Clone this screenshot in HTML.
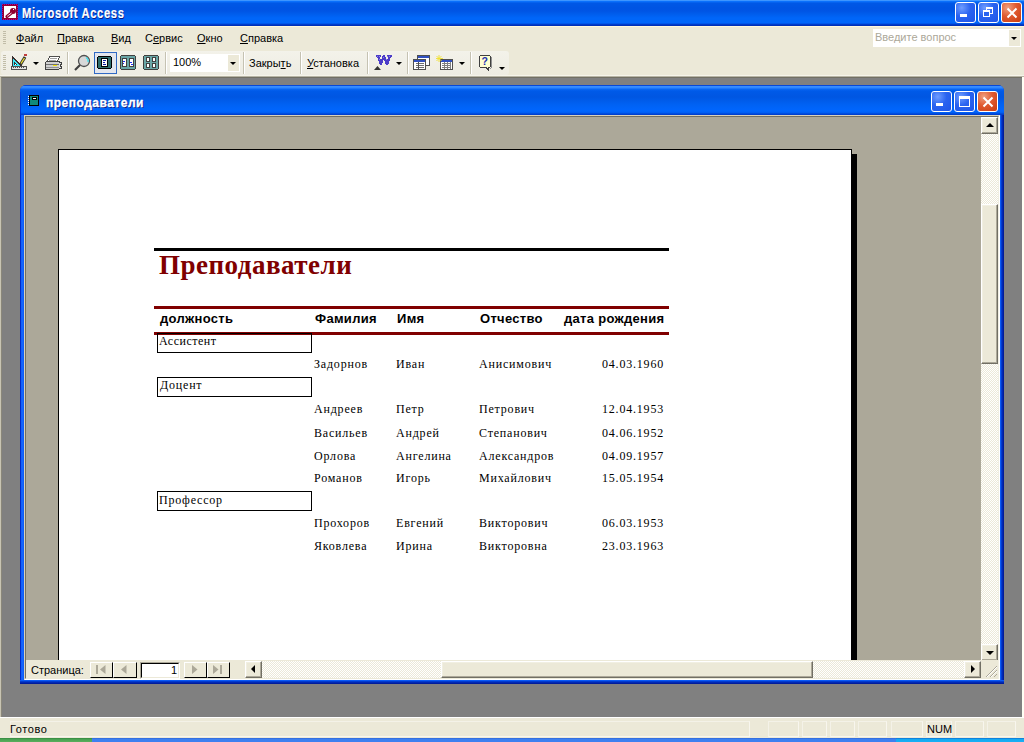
<!DOCTYPE html>
<html><head><meta charset="utf-8">
<style>
*{margin:0;padding:0;box-sizing:border-box}
html,body{width:1024px;height:742px;overflow:hidden;background:#ECE9D8;font-family:"Liberation Sans",sans-serif;font-size:11px;color:#000}
.a{position:absolute}
svg{position:absolute;overflow:visible}
#title{left:0;top:0;width:1024px;height:26px;background:linear-gradient(#3D95FF 0px,#3D95FF 1px,#0A74FF 1px,#0A6CF8 2px,#0058E6 3px,#0054E3 8px,#0055E5 11px,#005DEC 14px,#0066F9 18px,#0066FA 23px,#0048DA 24px,#0030B8 25px,#0030B8 26px)}
.ttl{color:#fff;font-weight:bold;text-shadow:1px 1px 0 #0A1883;white-space:nowrap}
.menu{top:32px;font-size:11px;white-space:nowrap}
.u{text-decoration:underline;text-underline-offset:1px}
.cb{width:21px;height:21px;border:1px solid #fff;border-radius:3px;background:radial-gradient(circle at 30% 25%,#6F9DFF 0,#2A63F0 45%,#1E55E8 100%)}
.cb.x{background:radial-gradient(circle at 30% 25%,#F0A080 0,#E05A30 45%,#C83C10 100%)}
.sep{width:1px;height:22px;background:#C5C2B2;border-right:1px solid #fff;width:2px}
.dd{width:0;height:0;border-left:3px solid transparent;border-right:3px solid transparent;border-top:3px solid #000}
.dither{background-color:#FFFFFF;background-image:linear-gradient(45deg,#ECE9D8 25%,transparent 25%,transparent 75%,#ECE9D8 75%),linear-gradient(45deg,#ECE9D8 25%,transparent 25%,transparent 75%,#ECE9D8 75%);background-size:2px 2px;background-position:0 0,1px 1px}
.btn3d{background:#ECE9D8;border-top:1px solid #fff;border-left:1px solid #fff;border-right:1px solid #716F64;border-bottom:1px solid #716F64;box-shadow:inset -1px -1px 0 #ACA899,inset 1px 1px 0 #F1EFE2}
.serif{font-family:"Liberation Serif",serif;font-size:12px;white-space:nowrap;letter-spacing:0.8px}
.hdr{font-weight:bold;font-size:13px;white-space:nowrap;letter-spacing:0.3px}
.pbox{border:1px solid #000;width:155px;height:20px}
</style></head><body>

<!-- main title bar -->
<div id="title" class="a"></div>
<svg style="left:2px;top:4px" width="16" height="16" shape-rendering="crispEdges">
 <rect x="0" y="0" width="16" height="16" fill="#900030"/>
 <path d="M0 0h1M2 0h1M4 0h1M6 0h1M8 0h1M10 0h1M12 0h1M14 0h1M1 15h1M3 15h1M5 15h1M7 15h1M9 15h1M11 15h1M13 15h1M15 15h1M0 2v1M0 4v1M0 6v1M0 8v1M0 10v1M0 12v1M15 1v1M15 3v1M15 5v1M15 7v1M15 9v1M15 11v1M15 13v1" stroke="#A000A0"/>
 <rect x="2" y="2" width="12" height="12" fill="#fff"/>
 <circle cx="11" cy="7" r="3" fill="#900030" shape-rendering="auto"/>
 <path d="M10 8.5 L5 12.5" stroke="#900030" stroke-width="3.2" stroke-linecap="round" shape-rendering="auto"/>
 <rect x="11" y="5" width="1" height="1" fill="#fff"/><path d="M9.5 9 L5.2 12.3" stroke="#fff" stroke-width="0.9" shape-rendering="auto"/>
</svg>
<div class="a ttl" style="left:22px;top:5px;font-size:14px;letter-spacing:0.8px;transform:scaleX(0.8);transform-origin:0 0;-webkit-text-stroke:0.2px #fff">Microsoft Access</div>
<div class="a cb" style="left:955px;top:2px"><div class="a" style="left:4px;top:11px;width:7px;height:3px;background:#fff"></div></div>
<div class="a cb" style="left:978px;top:2px"><div class="a" style="left:7px;top:4px;width:7px;height:7px;border:1px solid #fff;border-top-width:2px"></div><div class="a" style="left:4px;top:7px;width:7px;height:7px;border:1px solid #fff;border-top-width:2px;background:#2A63F0"></div></div>
<div class="a cb x" style="left:1001px;top:2px"><svg style="left:4px;top:4px" width="12" height="12"><path d="M1.5 1.5 L10.5 10.5 M10.5 1.5 L1.5 10.5" stroke="#fff" stroke-width="2"/></svg></div>

<!-- menu bar -->
<div class="a" style="left:0;top:26px;width:1024px;height:1px;background:#FFF8DC"></div>
<div class="a" style="left:3px;top:31px;width:3px;height:13px;background:repeating-linear-gradient(#C1BDA8 0,#C1BDA8 1px,transparent 1px,transparent 2px)"></div>
<div class="a menu" style="left:16px"><span class="u">Ф</span>айл</div>
<div class="a menu" style="left:57px"><span class="u">П</span>равка</div>
<div class="a menu" style="left:111px"><span class="u">В</span>ид</div>
<div class="a menu" style="left:145px">С<span class="u">е</span>рвис</div>
<div class="a menu" style="left:197px"><span class="u">О</span>кно</div>
<div class="a menu" style="left:240px"><span class="u">С</span>правка</div>
<div class="a" style="left:873px;top:29px;width:148px;height:18px;background:#fff"></div>
<div class="a" style="left:1009px;top:30px;width:11px;height:16px;background:#ECE9D8"></div>
<div class="a dd" style="left:1011px;top:37px"></div>
<div class="a" style="left:875px;top:31px;color:#ACA899;font-size:11px">Введите вопрос</div>

<!-- toolbar -->
<div class="a" style="left:1px;top:51px;width:508px;height:24px;background:linear-gradient(#F3F2EA,#EEECE2);border-radius:3px"></div>
<div class="a" style="left:3px;top:55px;width:3px;height:15px;background:repeating-linear-gradient(#C1BDA8 0,#C1BDA8 1px,transparent 1px,transparent 2px)"></div>
<svg id="ic-design" style="left:11px;top:54px" width="16" height="16" shape-rendering="crispEdges">
 <path d="M1 1 L1 13 L12 13 Z" fill="#3A3030"/><path d="M2 4 L2 12 L9 12 Z" fill="#3CE8F8"/>
 <path d="M3 8 L3 11 L6 11 Z" fill="#3A3030"/><rect x="4" y="10" width="1" height="1" fill="#fff"/>
 <rect x="0" y="12" width="16" height="4" fill="#505050"/><rect x="1" y="13" width="14" height="2" fill="#E4E4E4"/>
 <path d="M2 13h1M4 13h1M6 13h1M8 13h1M10 13h1M12 13h1" stroke="#505050"/>
 <path d="M9.5 10.5 L14 3" stroke="#303030" stroke-width="3" shape-rendering="auto"/>
 <path d="M10 9.5 L13.5 4" stroke="#F0E030" stroke-width="1.3" shape-rendering="auto"/>
 <rect x="13" y="0" width="3" height="2" fill="#C04040"/>
</svg>
<div class="a dd" style="left:33px;top:62px"></div>
<svg style="left:45px;top:55px" width="17" height="16" shape-rendering="crispEdges">
 <path d="M4.5 1.5 L14.5 1.5 L12.5 6.5 L2.5 6.5 Z" fill="#fff" stroke="#505050"/>
 <path d="M5 3h7M4 5h7" stroke="#A0A0A0"/>
 <rect x="0.5" y="6.5" width="14" height="8" rx="1.5" fill="#D0D0D0" stroke="#404040"/>
 <rect x="1" y="9" width="13" height="1" fill="#707070"/><rect x="1" y="12" width="13" height="1" fill="#909090"/>
 <rect x="8" y="10" width="4" height="1" fill="#F0E000"/>
 <path d="M14 7h2v2h-1v2h1v2h-2" fill="#E0E0E0" stroke="#404040"/>
</svg>
<div class="a sep" style="left:67px;top:52px"></div>
<svg style="left:73px;top:54px" width="18" height="18">
 <circle cx="11" cy="7" r="5.5" fill="#D8D8D8" stroke="#505050" stroke-width="1.3"/>
 <path d="M13 3.5 A4 4 0 0 1 15 8" stroke="#30E0F0" stroke-width="1.2" fill="none"/>
 <path d="M2 16 L7 11" stroke="#404040" stroke-width="2.2"/>
</svg>
<div class="a" style="left:94px;top:52px;width:23px;height:22px;background:#E3E6EE;border:1px solid #316AC5"></div>
<svg style="left:97px;top:56px" width="15" height="13" shape-rendering="crispEdges">
 <rect x="0.5" y="0.5" width="14" height="12" rx="2" fill="#2E6E6E" stroke="#000"/>
 <rect x="4" y="2" width="7" height="9" fill="#000"/><rect x="5" y="3" width="5" height="7" fill="#fff"/>
 <rect x="6" y="4" width="3" height="1" fill="#1020A0"/><rect x="6" y="6" width="2" height="1" fill="#1020A0"/><rect x="6" y="8" width="3" height="1" fill="#1020A0"/>
</svg>
<svg style="left:120px;top:55px" width="16" height="15" shape-rendering="crispEdges">
 <path d="M1 0h14v1h1v13h-1v1H1v-1H0V1h1z" fill="#404040"/>
 <rect x="1" y="1" width="14" height="13" fill="#6AA6A6"/>
 <rect x="2" y="3" width="5" height="9" fill="#404040"/><rect x="3" y="4" width="3" height="7" fill="#fff"/>
 <rect x="9" y="3" width="5" height="9" fill="#404040"/><rect x="10" y="4" width="3" height="7" fill="#fff"/>
 <rect x="3" y="6" width="2" height="1" fill="#2030F0"/><rect x="3" y="8" width="1" height="1" fill="#2030F0"/>
 <rect x="10" y="7" width="2" height="1" fill="#2030F0"/><rect x="11" y="9" width="2" height="1" fill="#2030F0"/>
</svg>
<svg style="left:143px;top:55px" width="16" height="15" shape-rendering="crispEdges">
 <path d="M1 0h14v1h1v13h-1v1H1v-1H0V1h1z" fill="#404040"/>
 <rect x="1" y="1" width="14" height="13" fill="#6AA6A6"/>
 <rect x="3" y="2" width="4" height="5" fill="#404040"/><rect x="4" y="3" width="2" height="3" fill="#fff"/>
 <rect x="9" y="2" width="4" height="5" fill="#404040"/><rect x="10" y="3" width="2" height="3" fill="#fff"/>
 <rect x="3" y="8" width="4" height="5" fill="#404040"/><rect x="4" y="9" width="2" height="3" fill="#fff"/>
 <rect x="9" y="8" width="4" height="5" fill="#404040"/><rect x="10" y="9" width="2" height="3" fill="#fff"/>
</svg>

<div class="a sep" style="left:165px;top:52px"></div>
<div class="a" style="left:170px;top:54px;width:70px;height:18px;background:#fff"></div>
<div class="a" style="left:228px;top:55px;width:11px;height:16px;background:#ECE9D8"></div>
<div class="a dd" style="left:230px;top:62px"></div>
<div class="a" style="left:173px;top:56px">100%</div>
<div class="a sep" style="left:243px;top:52px"></div>
<div class="a menu" style="left:249px;top:57px">Закры<span class="u">т</span>ь</div>
<div class="a sep" style="left:300px;top:52px"></div>
<div class="a menu" style="left:307px;top:57px"><span class="u">У</span>становка</div>
<div class="a sep" style="left:367px;top:52px"></div>
<svg style="left:374px;top:55px" width="17" height="16" shape-rendering="crispEdges">
 <path d="M2 0h5v2h-1l1 4l2-6h2l2 6l1-4h-1v-2h5v2h-1l-3 8h-2l-2-6l-2 6h-2l-3-8h-1z" fill="#4C3CC8"/>
 <path d="M3 1h1M5 1h1M13 1h1M15 1h1M5 4h1M12 4h1M9 2h1" stroke="#8C80E8"/>
 <path d="M0 15 L3.5 11 L7 15z" fill="#333" shape-rendering="auto"/>
</svg>
<div class="a dd" style="left:396px;top:62px"></div>
<div class="a sep" style="left:407px;top:52px"></div>
<svg style="left:413px;top:55px" width="18" height="16" shape-rendering="crispEdges">
 <rect x="4" y="0" width="13" height="11" fill="#505050"/><rect x="5" y="1" width="11" height="2" fill="#3050C0"/><rect x="5" y="3" width="11" height="7" fill="#fff"/>
 <rect x="0" y="4" width="13" height="11" fill="#505050"/><rect x="1" y="5" width="11" height="2" fill="#3050C0"/><rect x="1" y="7" width="11" height="7" fill="#fff"/>
 <path d="M3 8h8M3 10h8M3 12h8" stroke="#707070"/><path d="M5 7v7" stroke="#505050"/>
</svg>
<svg style="left:436px;top:55px" width="18" height="16" shape-rendering="crispEdges">
 <rect x="4" y="4" width="13" height="11" fill="#505050"/><rect x="5" y="5" width="11" height="2" fill="#3050C0"/><rect x="5" y="7" width="11" height="7" fill="#fff"/>
 <path d="M6 8h9M6 10h9M6 12h9M8 7v7M11 7v7M14 7v7" stroke="#808080"/>
 <path d="M3 0v7M0 3.5h7M0.5 1l5 5M5.5 1l-5 5" stroke="#F0E030" shape-rendering="auto" stroke-width="0.9"/>
</svg>
<div class="a dd" style="left:459px;top:62px"></div>
<div class="a sep" style="left:470px;top:52px"></div>
<svg style="left:478px;top:55px" width="16" height="16" shape-rendering="crispEdges">
 <path d="M2 0h10v1h1v11h-1v1h-1v3h-1l-3-3h-5v-1h-1v-11h1z" fill="#404040"/>
 <path d="M2 1h10v11h-2v2l-2-2h-6z" fill="#FFFFD0"/>
 <path d="M13 2h1v11h-1zM12 13h1v1h-1z" fill="#909090"/>
 <text x="3.5" y="10" font-family="Liberation Sans" font-weight="bold" font-size="10.5" fill="#2030B0" shape-rendering="auto">?</text>
</svg>
<div class="a dd" style="left:499px;top:67px"></div>

<!-- MDI area -->
<div class="a" style="left:0;top:75px;width:1024px;height:1px;background:#F6F4EA"></div>
<div class="a" style="left:0;top:76px;width:1024px;height:1px;background:#B8B5A5"></div>
<div class="a" style="left:0;top:77px;width:1px;height:641px;background:#C8C4B2"></div>
<div class="a" style="left:1px;top:77px;width:1021px;height:641px;background:#808080;border-top:1px solid #716F64;border-left:1px solid #8A877A"></div>
<div class="a" style="left:1022px;top:77px;width:2px;height:641px;background:#FFFFF4"></div>

<!-- child window -->
<div class="a" style="left:20px;top:85px;width:984px;height:599px;background:#0842D8;border-radius:6px 6px 0 0"></div>
<div class="a" style="left:20px;top:85px;width:984px;height:30px;border-radius:6px 6px 0 0;background:linear-gradient(#0848D8 0,#0848D8 1px,#3C90FF 1px,#2C84FF 3px,#0A68F5 4px,#005AE8 6px,#0056E2 12px,#0062F4 20px,#0066FF 26px,#005CF0 28px,#0040D0 29px,#0040D0 30px)"></div>
<div class="a" style="left:20px;top:115px;width:4px;height:569px;background:linear-gradient(90deg,#0028C8 0,#0028C8 1px,#0A5AF5 1px,#1A68FF 2px,#0A5AF5 4px)"></div><div class="a" style="left:20px;top:92px;width:1px;height:23px;background:linear-gradient(#0848E0,#0030D0)"></div>
<div class="a" style="left:1000px;top:115px;width:4px;height:569px;background:linear-gradient(90deg,#0A5AF5 0,#0A5AF5 1px,#0046E0 1px,#0030C0 2px,#0020A8 3px,#001890 4px)"></div>
<div class="a" style="left:20px;top:680px;width:984px;height:4px;background:linear-gradient(#0A5AF5 0,#0A5AF5 1px,#0046E0 1px,#0030C0 2px,#0020A8 3px,#001890 4px)"></div>
<svg style="left:28px;top:95px" width="12" height="12" shape-rendering="crispEdges">
 <rect x="1" y="0" width="10" height="11" fill="#000"/><rect x="2" y="1" width="8" height="9" fill="#108A7A"/>
 <rect x="4" y="2" width="5" height="3" fill="#000"/><rect x="5" y="3" width="3" height="1" fill="#fff"/>
 <path d="M0 1h1M0 3h1M0 5h1M0 7h1M0 9h1" stroke="#fff"/>
</svg>
<div class="a ttl" style="left:46px;top:96px;font-size:12px;letter-spacing:0.5px;-webkit-text-stroke:0.3px #fff">преподаватели</div>
<div class="a cb" style="left:931px;top:91px"><div class="a" style="left:4px;top:11px;width:7px;height:3px;background:#fff"></div></div>
<div class="a cb" style="left:954px;top:91px"><div class="a" style="left:4px;top:4px;width:11px;height:11px;border:1px solid #fff;border-top-width:3px"></div></div>
<div class="a cb x" style="left:977px;top:91px"><svg style="left:4px;top:4px" width="12" height="12"><path d="M1.5 1.5 L10.5 10.5 M10.5 1.5 L1.5 10.5" stroke="#fff" stroke-width="2"/></svg></div>

<!-- content frame -->
<div class="a" style="left:24px;top:115px;width:976px;height:565px;background:#ECE9D8;border-top:1px solid #D8D2BD;border-left:1px solid #D8D2BD;border-right:1px solid #fff;border-bottom:1px solid #fff"></div>
<div class="a" style="left:25px;top:116px;width:974px;height:563px;border-top:1px solid #716F64;border-left:1px solid #716F64;border-right:1px solid #F1EFE2;border-bottom:1px solid #F1EFE2"></div>
<div class="a" style="left:26px;top:117px;width:955px;height:543px;background:#ACA899;overflow:hidden">
  <div class="a" style="left:32px;top:32px;width:794px;height:600px;background:#fff;border:1px solid #000"></div>
  <div class="a" style="left:826px;top:37px;width:5px;height:600px;background:#000"></div>
</div>

<!-- vertical scrollbar -->
<div class="a dither" style="left:981px;top:117px;width:17px;height:543px"></div>
<div class="a btn3d" style="left:981px;top:117px;width:17px;height:17px"></div>
<div class="a" style="left:986px;top:123px;width:0;height:0;border-left:4px solid transparent;border-right:4px solid transparent;border-bottom:4px solid #000"></div>
<div class="a btn3d" style="left:981px;top:204px;width:17px;height:160px"></div>
<div class="a btn3d" style="left:981px;top:644px;width:17px;height:17px"></div>
<div class="a" style="left:986px;top:651px;width:0;height:0;border-left:4px solid transparent;border-right:4px solid transparent;border-top:4px solid #000"></div>

<!-- bottom nav / h scrollbar -->
<div class="a" style="left:26px;top:660px;width:972px;height:19px;background:#ECE9D8"></div>
<div class="a" style="left:31px;top:664px">Страница:</div>
<div class="a" style="left:90px;top:662px;width:23px;height:16px;background:#ECE9D8;border-top:1px solid #fff;border-left:1px solid #fff;border-bottom:1px solid #000;border-right:1px solid #000"></div>
<div class="a" style="left:113px;top:662px;width:24px;height:16px;background:#ECE9D8;border-top:1px solid #fff;border-left:1px solid #fff;border-bottom:1px solid #000;border-right:1px solid #000"></div>
<div class="a" style="left:184px;top:662px;width:23px;height:16px;background:#ECE9D8;border-top:1px solid #fff;border-left:1px solid #fff;border-bottom:1px solid #000;border-right:1px solid #000"></div>
<div class="a" style="left:207px;top:662px;width:23px;height:16px;background:#ECE9D8;border-top:1px solid #fff;border-left:1px solid #fff;border-bottom:1px solid #000;border-right:1px solid #000"></div>
<svg style="left:90px;top:662px" width="140" height="16">
 <rect x="6" y="3" width="2" height="9" fill="#ACA899"/><path d="M15.5 3 V12 L10 7.5z" fill="#ACA899"/>
 <path d="M36.5 3 V12 L31 7.5z" fill="#ACA899"/>
 <path d="M102 3 V12 L107.5 7.5z" fill="#ACA899"/>
 <path d="M123 3 V12 L128.5 7.5z" fill="#ACA899"/><rect x="130" y="3" width="2" height="9" fill="#ACA899"/>
</svg>
<div class="a" style="left:140px;top:662px;width:40px;height:17px;background:#fff;border-top:1px solid #ACA899;border-left:1px solid #ACA899;border-right:1px solid #fff;border-bottom:1px solid #fff"></div>
<div class="a" style="left:141px;top:663px;width:38px;height:15px;border-top:1px solid #000;border-left:1px solid #000;border-right:1px solid #ECE9D8;border-bottom:1px solid #ECE9D8"></div>
<div class="a" style="left:171px;top:664px">1</div>
<div class="a dither" style="left:245px;top:661px;width:736px;height:17px"></div>
<div class="a btn3d" style="left:245px;top:661px;width:17px;height:17px"></div>
<div class="a" style="left:251px;top:665px;width:0;height:0;border-top:4px solid transparent;border-bottom:4px solid transparent;border-right:4px solid #000"></div>
<div class="a btn3d" style="left:441px;top:661px;width:372px;height:17px"></div>
<div class="a btn3d" style="left:964px;top:661px;width:17px;height:17px"></div>
<div class="a" style="left:971px;top:665px;width:0;height:0;border-top:4px solid transparent;border-bottom:4px solid transparent;border-left:4px solid #000"></div>
<svg style="left:981px;top:661px" width="17" height="17">
 <path d="M16 5 L5 16 M16 9 L9 16 M16 13 L13 16" stroke="#ACA899" stroke-width="1"/>
 <path d="M16 6 L6 16 M16 10 L10 16" stroke="#fff" stroke-width="1"/>
</svg>

<!-- report content -->
<div class="a" style="left:154px;top:248px;width:515px;height:3px;background:#000"></div>
<div class="a" style="left:159px;top:250px;font-family:'Liberation Serif',serif;font-weight:bold;font-size:27px;color:#800000;white-space:nowrap;letter-spacing:0.5px">Преподаватели</div>
<div class="a" style="left:154px;top:306px;width:515px;height:3px;background:#800000"></div>
<div class="a" style="left:154px;top:332px;width:515px;height:3px;background:#800000"></div>
<div class="a hdr" style="left:160px;top:311px">должность</div>
<div class="a hdr" style="left:315px;top:311px">Фамилия</div>
<div class="a hdr" style="left:397px;top:311px">Имя</div>
<div class="a hdr" style="left:480px;top:311px">Отчество</div>
<div class="a hdr" style="left:564px;top:311px">дата рождения</div>

<div class="a pbox" style="left:157px;top:333px"></div>
<div class="a serif" style="left:159px;top:334px;letter-spacing:0.5px">Ассистент</div>
<div class="a pbox" style="left:157px;top:377px"></div>
<div class="a serif" style="left:160px;top:378px">Доцент</div>
<div class="a pbox" style="left:157px;top:491px"></div>
<div class="a serif" style="left:159px;top:493px">Профессор</div>

<div class="a serif" style="left:314px;top:357px">Задорнов</div>
<div class="a serif" style="left:396px;top:357px">Иван</div>
<div class="a serif" style="left:479px;top:357px">Анисимович</div>
<div class="a serif" style="left:564px;top:357px;width:100px;text-align:right">04.03.1960</div>
<div class="a serif" style="left:314px;top:402px">Андреев</div>
<div class="a serif" style="left:396px;top:402px">Петр</div>
<div class="a serif" style="left:479px;top:402px">Петрович</div>
<div class="a serif" style="left:564px;top:402px;width:100px;text-align:right">12.04.1953</div>
<div class="a serif" style="left:314px;top:426px">Васильев</div>
<div class="a serif" style="left:396px;top:426px">Андрей</div>
<div class="a serif" style="left:479px;top:426px">Степанович</div>
<div class="a serif" style="left:564px;top:426px;width:100px;text-align:right">04.06.1952</div>
<div class="a serif" style="left:314px;top:449px">Орлова</div>
<div class="a serif" style="left:396px;top:449px">Ангелина</div>
<div class="a serif" style="left:479px;top:449px">Александров</div>
<div class="a serif" style="left:564px;top:449px;width:100px;text-align:right">04.09.1957</div>
<div class="a serif" style="left:314px;top:471px">Романов</div>
<div class="a serif" style="left:396px;top:471px">Игорь</div>
<div class="a serif" style="left:479px;top:471px">Михайлович</div>
<div class="a serif" style="left:564px;top:471px;width:100px;text-align:right">15.05.1954</div>
<div class="a serif" style="left:314px;top:516px">Прохоров</div>
<div class="a serif" style="left:396px;top:516px">Евгений</div>
<div class="a serif" style="left:479px;top:516px">Викторович</div>
<div class="a serif" style="left:564px;top:516px;width:100px;text-align:right">06.03.1953</div>
<div class="a serif" style="left:314px;top:539px">Яковлева</div>
<div class="a serif" style="left:396px;top:539px">Ирина</div>
<div class="a serif" style="left:479px;top:539px">Викторовна</div>
<div class="a serif" style="left:564px;top:539px;width:100px;text-align:right">23.03.1963</div>

<!-- status bar -->
<div class="a" style="left:0;top:717px;width:1024px;height:1px;background:#fff"></div>
<div class="a" style="left:0;top:718px;width:1024px;height:20px;background:#ECE9D8"></div>
<div class="a" style="left:10px;top:721px;width:740px;height:16px;border:1px solid #F4F2E8;border-right-color:#F8F6EE;border-bottom-color:#F8F6EE"></div><div class="a" style="left:768px;top:721px;width:31px;height:16px;border:1px solid #F4F2E8;border-right-color:#F8F6EE;border-bottom-color:#F8F6EE"></div><div class="a" style="left:802px;top:721px;width:25px;height:16px;border:1px solid #F4F2E8;border-right-color:#F8F6EE;border-bottom-color:#F8F6EE"></div><div class="a" style="left:830px;top:721px;width:25px;height:16px;border:1px solid #F4F2E8;border-right-color:#F8F6EE;border-bottom-color:#F8F6EE"></div><div class="a" style="left:858px;top:721px;width:29px;height:16px;border:1px solid #F4F2E8;border-right-color:#F8F6EE;border-bottom-color:#F8F6EE"></div><div class="a" style="left:891px;top:721px;width:32px;height:16px;border:1px solid #F4F2E8;border-right-color:#F8F6EE;border-bottom-color:#F8F6EE"></div><div class="a" style="left:926px;top:721px;width:26px;height:16px;border:1px solid #F4F2E8;border-right-color:#F8F6EE;border-bottom-color:#F8F6EE"></div><div class="a" style="left:955px;top:721px;width:29px;height:16px;border:1px solid #F4F2E8;border-right-color:#F8F6EE;border-bottom-color:#F8F6EE"></div><div class="a" style="left:987px;top:721px;width:29px;height:16px;border:1px solid #F4F2E8;border-right-color:#F8F6EE;border-bottom-color:#F8F6EE"></div>
<div class="a" style="left:10px;top:723px;letter-spacing:0.6px">Готово</div>
<div class="a" style="left:927px;top:723px">NUM</div>
<!-- taskbar -->
<div class="a" style="left:0;top:738px;width:1024px;height:4px;background:linear-gradient(#2C5FD0,#3D80F0 1px,#3D80F0)"></div>
<div class="a" style="left:0;top:738px;width:92px;height:4px;background:linear-gradient(#30803A,#45A050 1px,#5AAE5E)"></div>
<div class="a" style="left:896px;top:738px;width:128px;height:4px;background:linear-gradient(#0C5CC8,#13A8F0 1px,#18B0F4)"></div>
</body></html>
